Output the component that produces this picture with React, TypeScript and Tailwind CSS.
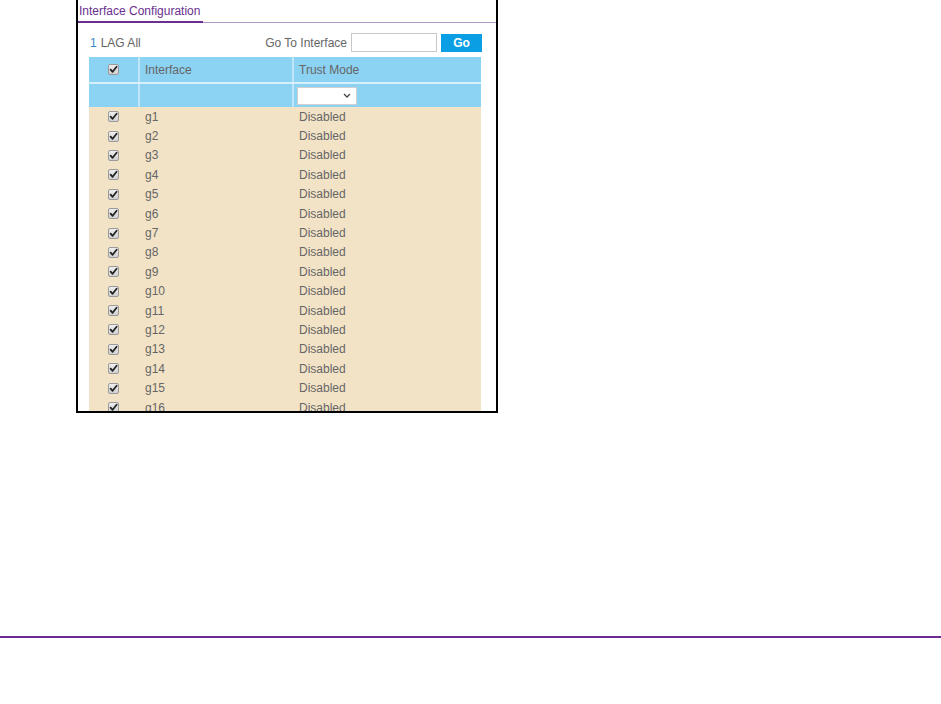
import React from "react";

function Check() {
  return (
    <svg width="11" height="11" viewBox="0 0 11 11" className="block">
      <defs>
        <linearGradient id="cbg" x1="0" y1="0" x2="0" y2="1">
          <stop offset="0" stopColor="#f0f0f0" />
          <stop offset="1" stopColor="#cfcfcf" />
        </linearGradient>
      </defs>
      <rect x="0.5" y="0.5" width="10" height="10" rx="1.5" fill="url(#cbg)" stroke="#9a9a9a" />
      <path d="M2.6 5.6 L4.6 7.8 L8.6 2.8" fill="none" stroke="#222" strokeWidth="1.8" strokeLinecap="round" strokeLinejoin="round" />
    </svg>
  );
}

const rows = Array.from({ length: 16 }, (_, i) => `g${i + 1}`);

export default function App() {
  return (
    <div className="w-[941px] h-[704px] bg-white flex flex-col" style={{ fontFamily: '"Liberation Sans", Arial, sans-serif' }}>
      <div className="ml-[76px] w-[422px] h-[413px] border-l-2 border-r-2 border-b-2 border-black overflow-hidden flex flex-col">
        <div className="flex items-end h-[23px]">
          <div className="w-[125px] h-[23px] border-b-2 border-[#6b2f8f] text-[12px] leading-[14px] text-[#6b2f8f] pl-[1px] pt-[4px]">
            Interface Configuration
          </div>
          <div className="flex-1 border-b border-[#b597c5]" />
        </div>
        <div className="flex items-center h-[20px] mt-[10px] pl-[12px] pr-[14px] text-[12px] text-[#666]">
          <span className="text-[#3b87c6]">1</span>
          <span className="ml-[4px]">LAG All</span>
          <span className="ml-auto">Go To Interface</span>
          <div className="ml-[4px] w-[86px] h-[19px] border border-[#c8c8c8] bg-white" />
          <div className="ml-[4px] w-[41px] h-[18px] bg-[#0a9fe5] text-white text-[12px] font-bold flex items-center justify-center">Go</div>
        </div>
        <div className="mt-[5px] ml-[11px] w-[392px] flex flex-col text-[12px] text-[#666]">
          <div className="flex h-[25px] bg-[#8bd2f3]">
            <div className="w-[51px] flex items-center justify-center border-r-2 border-[#bfe6f8]"><Check /></div>
            <div className="w-[154px] flex items-center pl-[5px] border-r-2 border-[#bfe6f8]">Interface</div>
            <div className="flex-1 flex items-center pl-[5px]">Trust Mode</div>
          </div>
          <div className="h-[2px] bg-[#d7f0fb]" />
          <div className="flex h-[23px] bg-[#8bd2f3]">
            <div className="w-[51px] border-r-2 border-[#bfe6f8]" />
            <div className="w-[154px] border-r-2 border-[#bfe6f8]" />
            <div className="flex-1 flex items-center pl-[3px]">
              <div className="w-[60px] h-[18px] bg-white border border-[#d0d0d0] flex items-center justify-end pr-[5px]">
                <svg width="8" height="5" viewBox="0 0 8 5"><path d="M1 1 L4 4 L7 1" fill="none" stroke="#444" strokeWidth="1.3" /></svg>
              </div>
            </div>
          </div>
          <div className="bg-[#f2e3c6] flex flex-col">
            {rows.map((r) => (
              <div key={r} className="flex h-[19.4px] items-center">
                <div className="w-[49px] mr-[2px] flex items-center justify-center"><Check /></div>
                <div className="w-[154px] pl-[5px] leading-[14px]">{r}</div>
                <div className="flex-1 pl-[5px] leading-[14px]">Disabled</div>
              </div>
            ))}
          </div>
        </div>
      </div>
      <div className="mt-[223px] h-[2px] bg-[#6b2d90]" />
    </div>
  );
}
